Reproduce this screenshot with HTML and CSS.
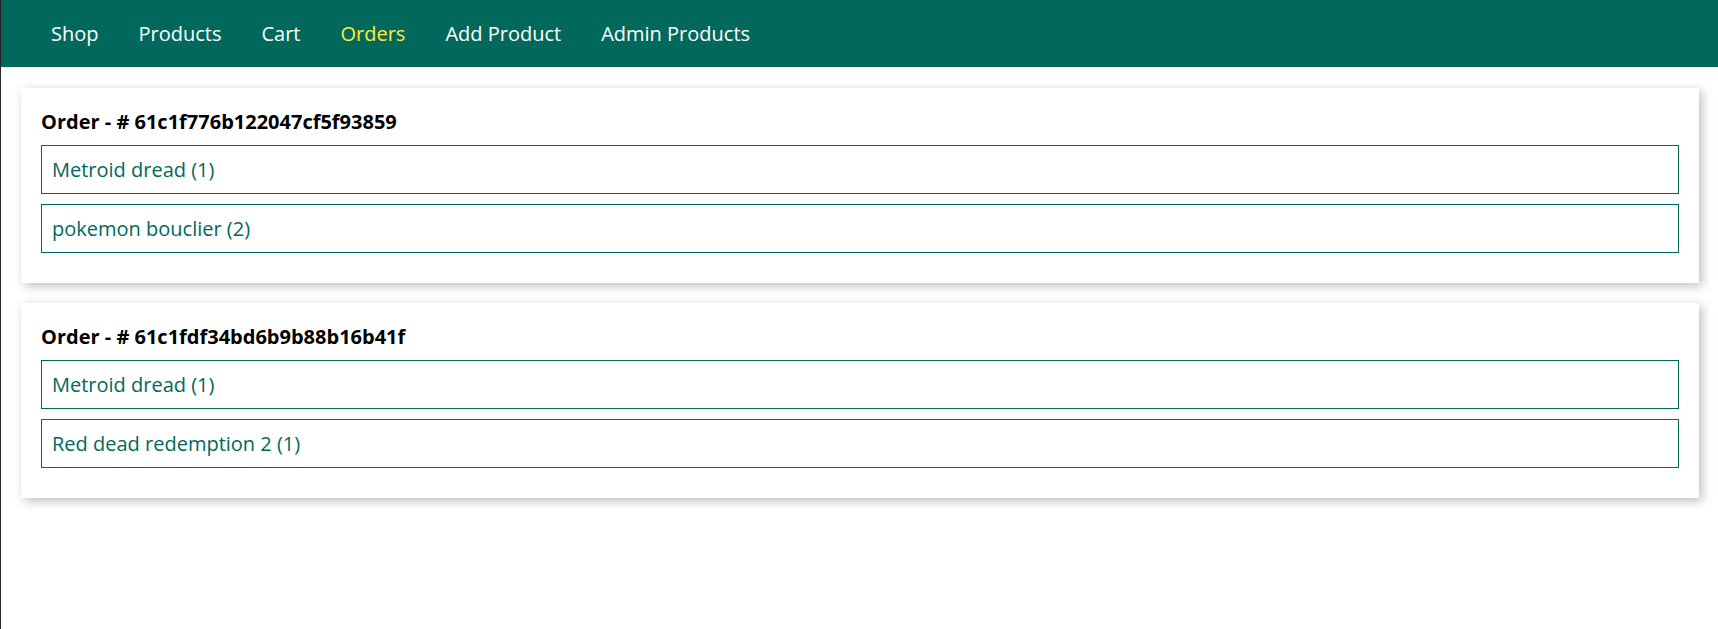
FILE: index.html
```html
<!DOCTYPE html>
<html lang="en">
<head>
<meta charset="UTF-8">
<title>Your Orders</title>
<link rel="stylesheet" href="styles.css">
</head>
<body>
<header class="main-header">
  <nav class="main-header__nav">
    <ul class="main-header__item-list">
      <li class="main-header__item"><a href="#">Shop</a></li>
      <li class="main-header__item"><a href="#">Products</a></li>
      <li class="main-header__item"><a href="#">Cart</a></li>
      <li class="main-header__item"><a class="active" href="#">Orders</a></li>
      <li class="main-header__item"><a href="#">Add Product</a></li>
      <li class="main-header__item"><a href="#">Admin Products</a></li>
    </ul>
  </nav>
</header>
<main class="main">
  <ul class="orders">
    <li class="orders__item">
      <h1 class="orders__title">Order - # 61c1f776b122047cf5f93859</h1>
      <ul class="orders__products">
        <li class="orders__products-item">Metroid dread (1)</li>
        <li class="orders__products-item">pokemon bouclier (2)</li>
      </ul>
    </li>
    <li class="orders__item">
      <h1 class="orders__title">Order - # 61c1fdf34bd6b9b88b16b41f</h1>
      <ul class="orders__products">
        <li class="orders__products-item">Metroid dread (1)</li>
        <li class="orders__products-item">Red dead redemption 2 (1)</li>
      </ul>
    </li>
  </ul>
</main>
</body>
</html>
```

FILE: styles.css
```css
html {
  background: #ffffff;
}

body {
  margin: 0;
  padding: 0;
  border-left: 1px solid #24242a;
  min-height: 629px;
  box-sizing: border-box;
  font-family: "Open Sans", "Noto Sans", sans-serif;
  overflow: hidden;
}

.main-header {
  height: 67px;
  background-color: #00695c;
  padding: 0 30px;
  display: flex;
  align-items: center;
}

.main-header__nav {
  height: 100%;
  display: flex;
  align-items: center;
}

.main-header__item-list {
  list-style: none;
  margin: 0;
  padding: 0;
  display: flex;
}

.main-header__item {
  margin: 0 20px;
  padding: 0;
  font-size: 20px;
}

.main-header__item a {
  text-decoration: none;
  color: #ffffff;
}

.main-header__item a.active {
  color: #ffeb3b;
}

.main {
  padding: 21px 19px 20px 20px;
}

.orders {
  list-style: none;
  padding: 0;
  margin: 0;
}

.orders__item {
  box-shadow: 2.5px 2.5px 10px rgba(0, 0, 0, 0.26);
  padding: 20px;
  margin-bottom: 20px;
  background: #ffffff;
}

.orders__title {
  margin: 0;
  font-size: 20px;
  font-weight: 700;
  color: #000000;
}

.orders__products {
  list-style: none;
  margin: 0;
  padding: 0;
}

.orders__products-item {
  margin: 10px 0;
  padding: 10px;
  border: 1px solid #00695c;
  color: #00695c;
  font-size: 20px;
}
```
